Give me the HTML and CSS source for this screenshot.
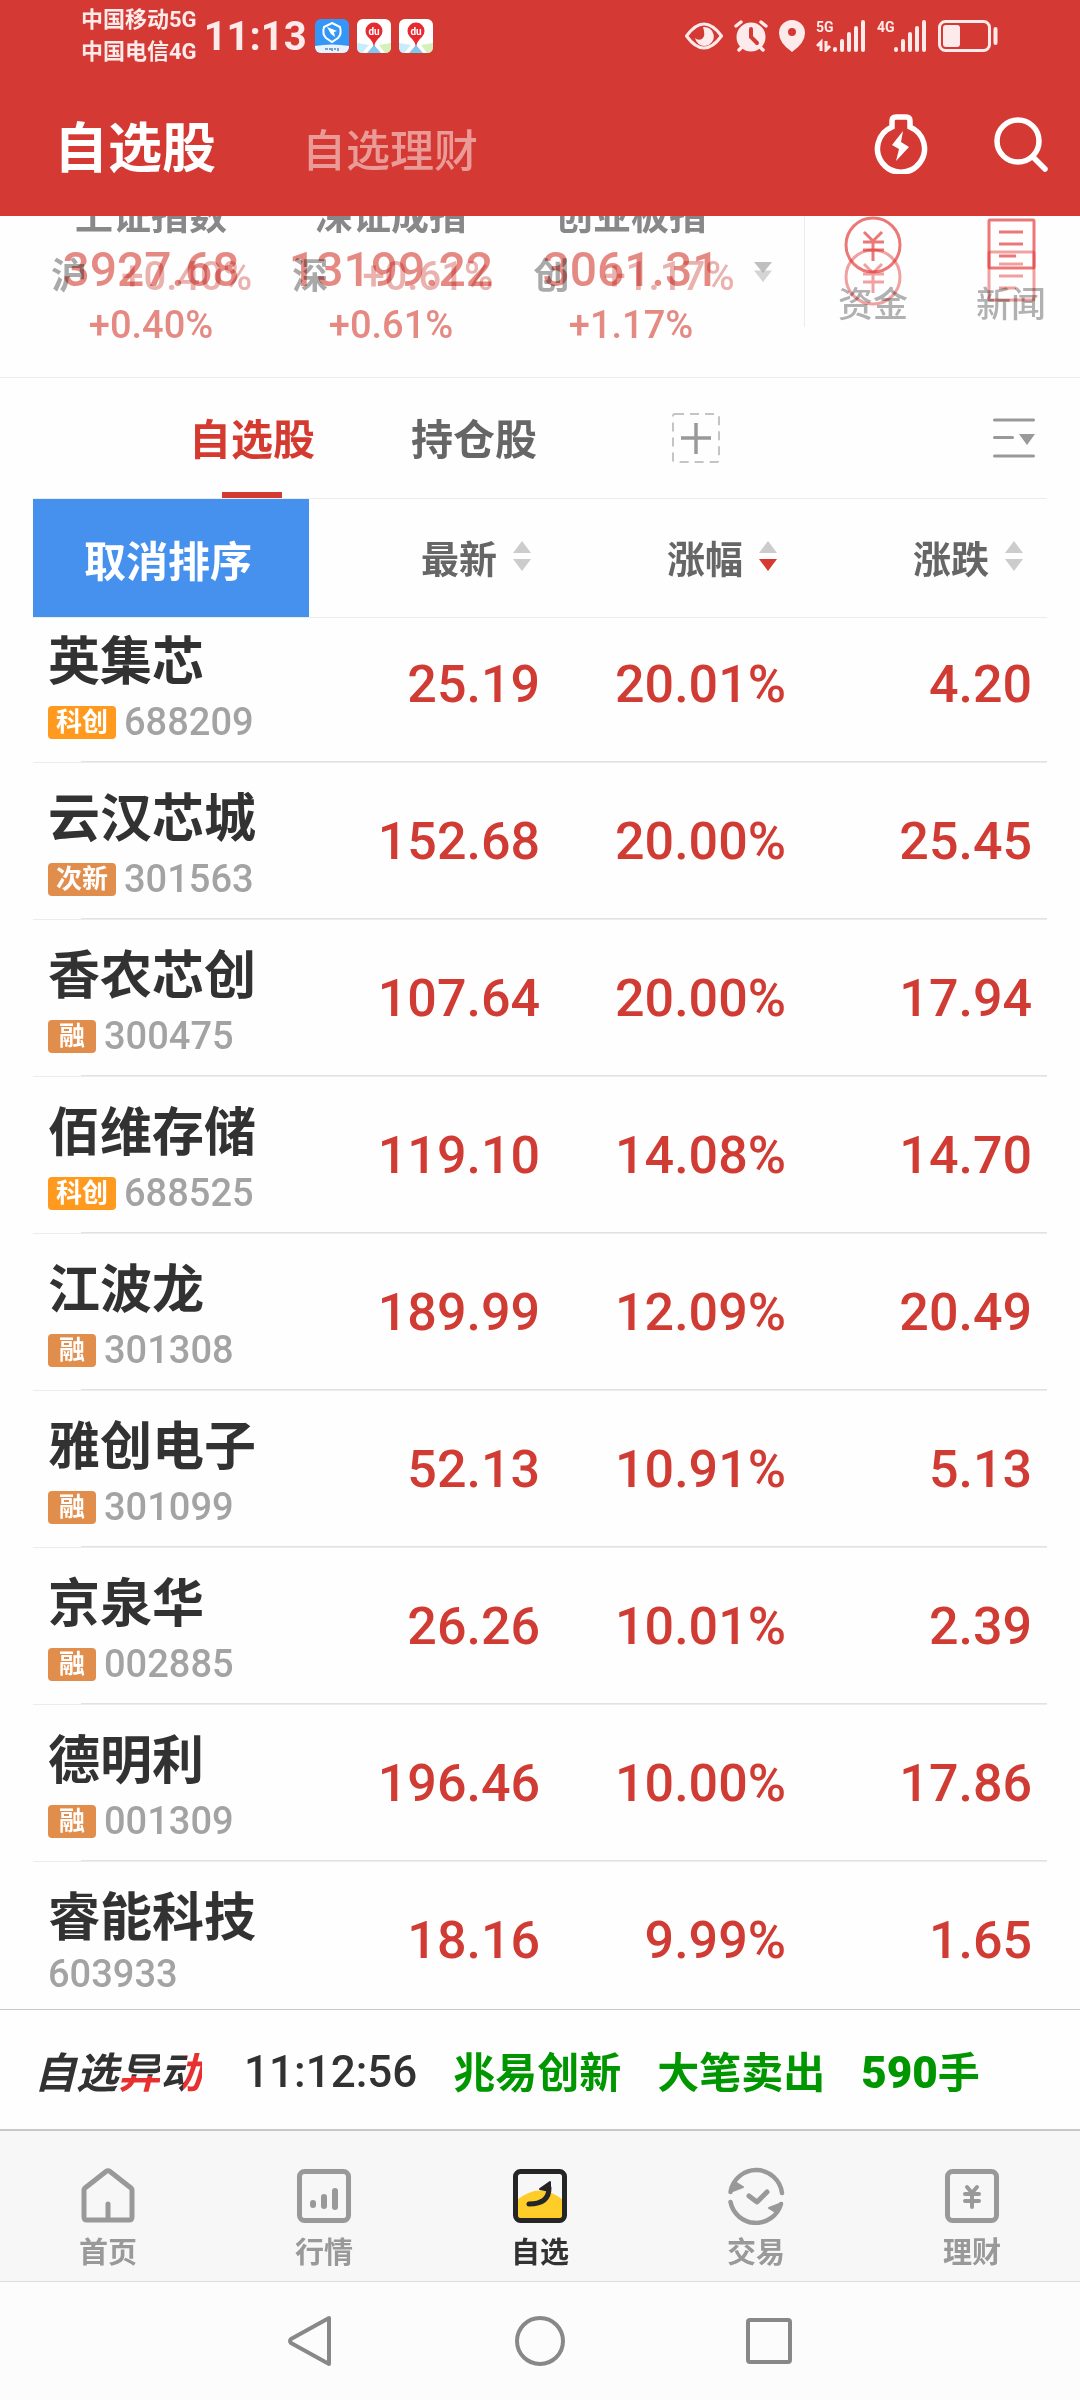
FILE: index.html
```html
<!DOCTYPE html>
<html lang="zh-CN">
<head>
<meta charset="utf-8">
<meta name="viewport" content="width=device-width, initial-scale=1">
<title>自选股</title>
<link rel="stylesheet" href="styles.css">
</head>
<body>
<header class="top">
  <div class="status">
    <div class="carriers"><span>中国移动5G</span><span>中国电信4G</span></div>
    <time class="clock">11:13</time>
    <div class="apps">
      <svg width="34" height="34" viewBox="0 0 34 34"><rect width="34" height="34" rx="6" fill="#3497f8"/><path d="M0 27Q17 24 34 27V28a6 6 0 0 1-6 6H6a6 6 0 0 1-6-6z" fill="#e8f3fe"/><path d="M17 4l8 4q2 7-2 11l-6 4-6-4q-4-4-2-11z" fill="none" stroke="#fff" stroke-width="2"/><path d="M12 8l10 4-3 1 1 5-4-3z" fill="#fff"/><path d="M10 30h3m2-1v2m2-2v3m2-2h2m2-1v3" stroke="#5087c4" stroke-width="1.500"/></svg>
      <svg width="34" height="34" viewBox="0 0 34 34"><rect width="34" height="34" rx="6" fill="#fff"/><path d="M0 24l12 2-7 8Q0 34 0 28z" fill="#c7ecfb"/><path d="M17 26l7 8H10z" fill="#7fc9f0"/><path d="M22 26l12-2v4q0 6-6 6z" fill="#d4f0bd"/><path d="M17 28Q16 22 11 18A8.500 8.500 0 1 1 23 18Q18 22 17 28z" fill="#e52a30"/><text x="17" y="16" class="du">du</text></svg>
      <svg width="34" height="34" viewBox="0 0 34 34"><rect width="34" height="34" rx="6" fill="#fff"/><path d="M0 24l12 2-7 8Q0 34 0 28z" fill="#c7ecfb"/><path d="M17 26l7 8H10z" fill="#7fc9f0"/><path d="M22 26l12-2v4q0 6-6 6z" fill="#d4f0bd"/><path d="M17 28Q16 22 11 18A8.500 8.500 0 1 1 23 18Q18 22 17 28z" fill="#e52a30"/><text x="17" y="16" class="du">du</text></svg>
    </div>
    <div class="indicators">
      <svg width="38" height="32" viewBox="0 0 38 32"><path d="M1.500 16Q19-8 36.500 16Q19 40 1.500 16z" fill="none" stroke="#fdeaea" stroke-width="3"/><path d="M18 7a9.500 9.500 0 1 1-8 11q3 3 7 1 4-3 1-12z" fill="#fdeaea"/></svg>
      <svg width="34" height="32" viewBox="0 0 34 32"><circle cx="17" cy="17" r="14.500" fill="#fdeaea"/><path d="M2 6l5-4M32 6l-5-4M5 30l3-3M29 30l-3-3" stroke="#fdeaea" stroke-width="3.500" stroke-linecap="round"/><path d="M17 9v8l6 6" fill="none" stroke="#d43a33" stroke-width="4" stroke-linecap="round"/></svg>
      <svg width="26" height="32" viewBox="0 0 26 32"><path fill-rule="evenodd" d="M13 0a13 13 0 0 1 13 13q0 10-13 19Q0 23 0 13A13 13 0 0 1 13 0zm0 8a4 4 0 1 0 0 8 4 4 0 0 0 0-8z" fill="#fdeaea"/></svg>
      <div class="signal"><span>5G</span><svg width="50" height="32" viewBox="0 0 50 32"><path d="M19 29v1M26 21v9M33 14v16M40 8v22M47 2v28" stroke="#fdeaea" stroke-width="4" stroke-linecap="round"/><path d="M5 31V22l-4 4M10 21v9l4-4" fill="none" stroke="#fdeaea" stroke-width="3"/></svg></div>
      <div class="signal"><span>4G</span><svg width="50" height="32" viewBox="0 0 50 32"><path d="M19 29v1M26 21v9M33 14v16M40 8v22M47 2v28" stroke="#fdeaea" stroke-width="4" stroke-linecap="round"/></svg></div>
      <svg width="60" height="32" viewBox="0 0 60 32"><rect x="1.500" y="1.500" width="50" height="29" rx="6" fill="none" stroke="#fdeaea" stroke-width="3"/><rect x="5" y="5" width="17" height="22" rx="3" fill="#fdeaea"/><path d="M57.500 9v14" stroke="#fdeaea" stroke-width="4" stroke-linecap="round"/></svg>
    </div>
  </div>
  <div class="titlebar">
    <button class="title-main">自选股</button>
    <button class="title-sub">自选理财</button>
    <div class="actions">
      <button aria-label="闪电"><svg width="54" height="60" viewBox="0 0 54 60"><path d="M18 13V7q0-4 4-4h10q4 0 4 4v6a23.500 23.500 0 1 1-18 0z" fill="none" stroke="#fff" stroke-width="5.500"/><path d="M29 17L18 31l7 4-3 12 13-14-8-5z" fill="#fff"/></svg></button>
      <button aria-label="搜索"><svg width="54" height="56" viewBox="0 0 54 56"><circle cx="24" cy="25" r="21" fill="none" stroke="#fff" stroke-width="5.500"/><path d="M39 41l12 12" stroke="#fff" stroke-width="5.500" stroke-linecap="round"/></svg></button>
    </div>
  </div>
</header>

<section class="indices">
  <div class="index"><h2>上证指数</h2><b>3927.68</b><span>+0.40%</span></div>
  <div class="index"><h2>深证成指</h2><b>13199.22</b><span>+0.61%</span></div>
  <div class="index"><h2>创业板指</h2><b>3061.31</b><span>+1.17%</span></div>
  <button class="expand" aria-label="展开"><svg width="18" height="20" viewBox="0 0 18 20"><path d="M0 0h18L9 11z" fill="#aaa" opacity=".75"/><path d="M0 8.500h18L9 20z" fill="#aaa" opacity=".5"/></svg></button>
  <a class="shortcut" href="#"><svg width="60" height="90" viewBox="0 0 60 90" fill="none" stroke="#e2302e" stroke-width="3"><g opacity=".65"><circle cx="30" cy="29" r="27"/><path d="M21 16l9 9 9-9M20 26h21M20 34h21M30 25v20"/></g><g opacity=".45"><circle cx="30" cy="61" r="27"/><path d="M21 48l9 9 9-9M20 58h21M20 66h21M30 57v20"/></g></svg><span>资金</span></a>
  <a class="shortcut" href="#"><svg width="60" height="90" viewBox="0 0 60 90" fill="none" stroke="#e2302e" stroke-width="3"><g opacity=".65"><rect x="8" y="4" width="45" height="48" rx="1"/><path d="M18 16h24M18 28h24M18 40h17"/></g><g opacity=".45"><rect x="8" y="36" width="45" height="48" rx="1"/><path d="M18 48h24M18 60h24M18 72h17"/></g></svg><span>新闻</span></a>
  <div class="compact" aria-hidden="true">
    <p><i>沪</i><span>+0.40%</span></p>
    <p><i>深</i><span>+0.61%</span></p>
    <p><i>创</i><span>+1.17%</span></p>
  </div>
</section>

<nav class="tabs">
  <button class="tab active">自选股</button>
  <button class="tab">持仓股</button>
  <button class="add" aria-label="添加分组"><svg width="48" height="50" viewBox="0 0 48 50" fill="none"><rect x="1" y="1" width="46" height="48" rx="2" stroke="#c4c4c4" stroke-width="2" stroke-dasharray="9 6"/><path d="M24 10v31M9 25h30" stroke="#999" stroke-width="3.500"/></svg></button>
  <button class="sortmenu" aria-label="列表设置"><svg width="42" height="40" viewBox="0 0 42 40"><path d="M1.500 2h39M1.500 19.500h18M1.500 38h39" stroke="#999" stroke-width="3" stroke-linecap="round"/><path d="M26 16h16l-8 11z" fill="#999"/></svg></button>
</nav>

<main class="list">
<table>
  <colgroup><col class="c-name"><col><col><col></colgroup>
  <thead>
    <tr>
      <th><button class="cancel">取消排序</button></th>
      <th><button class="sort">最新<svg width="18" height="30" viewBox="0 0 18 30" fill="#ccc"><path d="M9 0l9 12H0z"/><path d="M0 18h18L9 30z"/></svg></button></th>
      <th><button class="sort">涨幅<svg width="18" height="30" viewBox="0 0 18 30" fill="#ccc"><path d="M9 0l9 12H0z"/><path d="M0 18h18L9 30z" fill="#d43a30"/></svg></button></th>
      <th><button class="sort">涨跌<svg width="18" height="30" viewBox="0 0 18 30" fill="#ccc"><path d="M9 0l9 12H0z"/><path d="M0 18h18L9 30z"/></svg></button></th>
    </tr>
  </thead>
  <tbody>
    <tr><td><strong>英集芯</strong><p class="code tagged"><em class="star">科创</em>688209</p></td><td>25.19</td><td>20.01%</td><td>4.20</td></tr>
    <tr><td><strong>云汉芯城</strong><p class="code tagged"><em>次新</em>301563</p></td><td>152.68</td><td>20.00%</td><td>25.45</td></tr>
    <tr><td><strong>香农芯创</strong><p class="code tagged"><em>融</em>300475</p></td><td>107.64</td><td>20.00%</td><td>17.94</td></tr>
    <tr><td><strong>佰维存储</strong><p class="code tagged"><em class="star">科创</em>688525</p></td><td>119.10</td><td>14.08%</td><td>14.70</td></tr>
    <tr><td><strong>江波龙</strong><p class="code tagged"><em>融</em>301308</p></td><td>189.99</td><td>12.09%</td><td>20.49</td></tr>
    <tr><td><strong>雅创电子</strong><p class="code tagged"><em>融</em>301099</p></td><td>52.13</td><td>10.91%</td><td>5.13</td></tr>
    <tr><td><strong>京泉华</strong><p class="code tagged"><em>融</em>002885</p></td><td>26.26</td><td>10.01%</td><td>2.39</td></tr>
    <tr><td><strong>德明利</strong><p class="code tagged"><em>融</em>001309</p></td><td>196.46</td><td>10.00%</td><td>17.86</td></tr>
    <tr><td><strong>睿能科技</strong><p class="code">603933</p></td><td>18.16</td><td>9.99%</td><td>1.65</td></tr>
  </tbody>
</table>
</main>

<section class="ticker">
  <h2 class="brand">自选<span class="y">异</span><span class="d">动</span></h2>
  <time>11:12:56</time>
  <span>兆易创新</span>
  <span>大笔卖出</span>
  <span><b>590</b>手</span>
</section>

<nav class="bottom">
  <a href="#"><svg width="58" height="58" viewBox="0 0 58 58" fill="none" stroke="#999" stroke-width="5" stroke-linecap="round" stroke-linejoin="round"><path d="M27 4.500q2-1.500 4 0L52 21q1 1 1 2v27q0 3-3 3H8q-3 0-3-3V23q0-1 1-2z"/><path d="M29 37v14"/></svg>首页</a>
  <a href="#"><svg width="58" height="58" viewBox="0 0 58 58" fill="none" stroke="#999" stroke-width="5" stroke-linecap="round"><rect x="4.500" y="4.500" width="49" height="49" rx="5"/><path d="M18 36v2M29 30v9M40 24v16" stroke-width="6"/></svg>行情</a>
  <a href="#" class="current"><svg width="58" height="58" viewBox="0 0 58 58" fill="none"><path d="M6 33Q29 14 52 33V52H6z" fill="#ffcd2a"/><rect x="4.500" y="4.500" width="49" height="49" rx="5" stroke="#252525" stroke-width="5"/><path d="M18 37Q38 37 38 21" stroke="#252525" stroke-width="5" stroke-linecap="round"/><path d="M29 22L39 15v9z" fill="#252525" stroke="#252525" stroke-width="2" stroke-linejoin="round"/></svg>自选</a>
  <a href="#"><svg width="58" height="58" viewBox="0 0 58 58" fill="none" stroke="#999" stroke-width="4.500" stroke-linecap="round" stroke-linejoin="round"><path d="M55 26A26 26 0 0 0 3.500 25M3.500 35A26 26 0 0 0 54 37"/><path d="M22 29l8 6 10-10" stroke-width="5"/><path d="M3 25L8 15l8 5z" fill="#999" stroke-width="2"/><path d="M55 36l-5 10-8-5z" fill="#999" stroke-width="2"/></svg>交易</a>
  <a href="#"><svg width="58" height="58" viewBox="0 0 58 58" fill="none" stroke="#999" stroke-width="5" stroke-linecap="round"><rect x="4.500" y="4.500" width="49" height="49" rx="5"/><path d="M24 20l5 6 5-6M22 27h14M22 34h14M29 27v13" stroke-width="4"/></svg>理财</a>
</nav>

<nav class="system">
  <button aria-label="返回"><svg width="50" height="56" viewBox="0 0 50 56"><path d="M43 5v46L5 30q-2-2 0-4z" fill="none" stroke="#888" stroke-width="4" stroke-linejoin="round"/></svg></button>
  <button aria-label="主屏幕"><svg width="50" height="56" viewBox="0 0 50 56"><circle cx="25" cy="28" r="23" fill="none" stroke="#888" stroke-width="4"/></svg></button>
  <button aria-label="最近任务"><svg width="50" height="56" viewBox="0 0 50 56"><rect x="4" y="7" width="42" height="42" rx="2" fill="none" stroke="#888" stroke-width="4"/></svg></button>
</nav>
</body>
</html>
```
FILE: styles.css
```css
* { box-sizing: border-box; }
body {
  margin: 0;
  background: #fefefe;
  color: #323232;
  font-family: Roboto, "Noto Sans CJK SC", sans-serif;
  font-weight: 500;
}
h2, p { margin: 0; font-weight: inherit; }
button {
  margin: 0;
  padding: 0;
  border: 0;
  background: none;
  color: inherit;
  font: inherit;
}
a { color: inherit; text-decoration: none; }
svg { display: block; flex: none; }
i, em { font-style: normal; }

/* Red header */
.top { background: #d43a33; color: #fff; }
.status {
  display: flex;
  align-items: center;
  height: 72px;
  padding: 0 82px 0 81px;
  color: #fdeaea;
}
.carriers {
  display: flex;
  flex-direction: column;
  font-size: 22px;
  font-weight: 700;
  line-height: 32px;
}
.clock {
  margin-left: 7px;
  font-size: 40px;
  font-weight: 700;
}
.apps { display: flex; gap: 8px; margin-left: 8px; }
.du {
  fill: #fff;
  font-size: 10px;
  font-weight: 700;
  text-anchor: middle;
}
.indicators { display: flex; gap: 11px; margin-left: auto; }
.signal { position: relative; }
.signal span {
  position: absolute;
  top: 0;
  left: 0;
  font-size: 14px;
  font-weight: 700;
  line-height: 14px;
}
.titlebar {
  display: flex;
  align-items: center;
  height: 144px;
  padding: 0 32px 0 54px;
}
.title-main { font-size: 54px; font-weight: 700; }
.title-sub {
  margin: 8px 0 0 86px;
  color: #ea9b97;
  font-size: 44px;
}
.actions {
  display: flex;
  align-items: center;
  gap: 66px;
  margin-left: auto;
}

/* Market index strip, cross-fading to its compact form */
.indices {
  position: relative;
  display: grid;
  grid-template-columns: 240fr 240fr 240fr 53fr 138fr 138fr;
  height: 162px;
  padding-left: 31px;
  overflow: hidden;
  border-bottom: 1px solid #ececec;
}
.index {
  display: flex;
  flex-direction: column;
  align-items: center;
  gap: 5px;
  margin-top: -24px;
  color: rgba(212, 58, 48, .6);
  line-height: 50px;
}
.index h2 {
  height: 48px;
  color: #888;
  font-size: 38px;
  font-weight: 700;
  line-height: 48px;
}
.index b { font-size: 48px; font-weight: 500; }
.index span { font-size: 38px; }
.expand { display: flex; padding: 46px 0 0 3px; }
.shortcut {
  display: flex;
  flex-direction: column;
  align-items: center;
  color: #b2b2b2;
  font-size: 35px;
  line-height: 40px;
}
.shortcut span { margin-top: -20px; mix-blend-mode: multiply; }
.expand + .shortcut {
  background: linear-gradient(#ececec, #ececec) 0 0 / 1px 111px no-repeat;
}
.compact {
  position: absolute;
  top: 36px;
  left: 31px;
  display: grid;
  grid-template-columns: repeat(3, 1fr);
  width: 69%;
  padding-right: 2%;
  mix-blend-mode: multiply;
  color: #ebb3b0;
  font-weight: 500;
  line-height: 50px;
}
.compact p {
  display: flex;
  justify-content: space-between;
  padding: 0 20px;
  font-size: 40px;
}
.compact i { color: #aaa; font-size: 36px; font-weight: 700; }

/* Group tabs */
.tabs {
  display: flex;
  align-items: center;
  height: 121px;
  margin: 0 33px;
  padding: 0 12px 0 156px;
  border-bottom: 1px solid #ececec;
  color: #666;
  font-size: 42px;
  font-weight: 700;
}
.tab { height: 120px; margin-right: 96px; padding-bottom: 4px; }
.tab.active {
  color: #d43a30;
  background: linear-gradient(#d43a30, #d43a30) 50% 100% / 60px 6px no-repeat;
}
.add { margin-left: 39px; }
.sortmenu { margin-left: auto; }

/* Stock table */
.list { margin: 0 33px; }
table { width: 100%; table-layout: fixed; border-spacing: 0; }
.c-name { width: 276px; }
th {
  height: 119px;
  padding: 0;
  border-bottom: 1px solid #ececec;
  color: #666;
  font-size: 38px;
  font-weight: 700;
}
.cancel {
  display: block;
  width: 100%;
  height: 118px;
  padding-right: 6px;
  background: #4691ee;
  color: #fff;
  font-size: 42px;
}
.sort {
  display: flex;
  align-items: center;
  justify-content: flex-end;
  gap: 16px;
  width: 100%;
  padding: 0 24px 4px 0;
}
td {
  height: 157px;
  padding: 49px 15px 0 0;
  border-bottom: 1px solid #ececec;
  box-shadow: inset 0 -1px #e2e2e2;
  color: #d03b33;
  font-size: 52px;
  line-height: 60px;
  text-align: right;
  vertical-align: top;
}
td:first-child {
  padding: 27px 0 0 15px;
  background: linear-gradient(#e2e2e2, #e2e2e2) 48px 100% / 100% 1px no-repeat;
  box-shadow: none;
  color: #323232;
  text-align: left;
}
td strong { display: block; font-weight: 700; }
.code {
  display: flex;
  align-items: center;
  height: 50px;
  color: #a3a3a3;
  font-size: 38px;
}
.code.tagged { height: 58px; }
.code em {
  min-width: 48px;
  margin-right: 8px;
  padding: 0 8px;
  border-radius: 4px;
  background: #e18d4b;
  color: #fff;
  font-size: 26px;
  font-weight: 700;
  line-height: 33px;
  text-align: center;
}
.code em.star { background: #ff9a1f; }
tbody tr:first-child td { height: 145px; padding-top: 37px; }
tbody tr:first-child td:first-child { padding-top: 15px; }
tbody tr:last-child td { height: 147px; border: 0; box-shadow: none; }
tbody tr:last-child td:first-child { background: none; }

/* Alert ticker */
.ticker {
  display: flex;
  align-items: center;
  gap: 36px;
  height: 120px;
  padding: 0 34px;
  border-top: 1px solid #c8c8c8;
  color: #009600;
  font-size: 42px;
  font-weight: 700;
  white-space: nowrap;
}
.ticker time {
  margin-left: 6px;
  padding-top: 4px;
  color: #323232;
  font-size: 44px;
  font-weight: 500;
}
.ticker b { font-size: 44px; }
.brand {
  color: #323232;
  font-size: 42px;
  font-style: italic;
  font-weight: 700;
}
.brand span {
  -webkit-background-clip: text;
  background-clip: text;
  color: transparent;
}
.brand .y { background-image: linear-gradient(#323232 56%, #e83030 56%); }
.brand .d { background-image: linear-gradient(98deg, #323232 58%, #e83030 58%); }

/* App navigation */
.bottom {
  display: grid;
  grid-template-columns: repeat(5, 1fr);
  height: 152px;
  border-top: 2px solid #c8c8c8;
  background: #f7f7f7;
  color: #999;
  font-size: 29px;
  font-weight: 700;
  line-height: 36px;
}
.bottom a {
  display: flex;
  flex-direction: column;
  align-items: center;
  gap: 10px;
  padding-top: 36px;
}
.bottom .current { color: #323232; }

/* System navigation */
.system {
  display: flex;
  align-items: center;
  justify-content: center;
  gap: 179px;
  height: 119px;
  border-top: 1px solid #ddd;
  background: #fcfcfc;
}
```
